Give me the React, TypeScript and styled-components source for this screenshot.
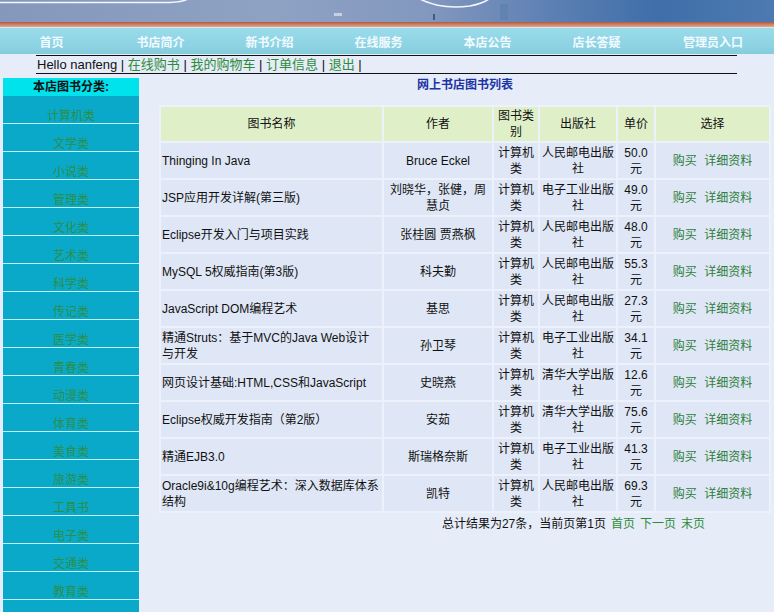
import styled, { createGlobalStyle } from 'styled-components';

const GlobalStyle = createGlobalStyle`
  html, body {
    margin: 0;
    padding: 0;
    background: #e6ecf8;
    font-family: "Liberation Sans", "Noto Sans CJK SC", sans-serif;
    font-size: 12px;
    color: #111;
  }
`;

const Page = styled.div`
  width: 774px;
  overflow: hidden;
`;

const Banner = styled.div`
  height: 22px;
  background: linear-gradient(90deg, #8598bb 0%, #8ea2c4 35%, #8398be 55%, #5b7fb3 72%, #3f6ea9 85%, #4d7ab0 100%);
  svg {
    display: block;
  }
`;

const Stripe = styled.div`
  height: 5px;
  background: linear-gradient(180deg, #a85c46 0%, #d8876a 60%, #e9a48a 100%);
  border-bottom: 1px solid #c8eef5;
`;

const Nav = styled.div`
  display: flex;
  height: 26px;
  align-items: center;
  background: linear-gradient(180deg, #9adbea 0%, #8dd3e3 70%, #84cbdc 100%);
`;

const NavItem = styled.span<{ $wide?: boolean }>`
  width: ${(p) => (p.$wide ? '124px' : '109px')};
  flex: none;
  text-align: center;
  color: #f2fbff;
  font-weight: bold;
  font-size: 12px;
  &:first-child {
    margin-left: -3px;
  }
`;

const UserBar = styled.div`
  margin: 1px 37px 0 36px;
  border-top: 1px solid #111;
  border-bottom: 1px solid #111;
  height: 17px;
  line-height: 17px;
  font-size: 13px;
  padding-left: 1px;
`;

const GreenLink = styled.span`
  color: #2e8b3a;
`;

const FooterLink = styled.span`
  color: #2e8b3a;
  margin-left: 5px;
`;

const Body = styled.div`
  display: flex;
  align-items: flex-start;
  margin-top: 4px;
  padding-left: 3px;
`;

const Sidebar = styled.div`
  width: 136px;
  flex: none;
  display: flex;
  flex-direction: column;
`;

const SideHead = styled.div`
  height: 18px;
  line-height: 18px;
  background: #00e3ec;
  text-align: center;
  font-weight: bold;
  color: #111;
`;

const SideItem = styled.div`
  height: 27px;
  border-bottom: 1px solid #bdf2f8;
  background: #0aa9ca;
  color: #2a8f48;
  display: flex;
  align-items: flex-end;
  justify-content: center;
  line-height: 14px;
`;

const Main = styled.div`
  margin-left: 20px;
  width: 612px;
  display: flex;
  flex-direction: column;
`;

const Title = styled.div`
  text-align: center;
  color: #1b35a6;
  font-weight: bold;
  font-size: 12px;
  line-height: 16px;
  margin-top: -1px;
  margin-bottom: 12px;
`;

const BookTable = styled.table`
  width: 612px;
  table-layout: fixed;
  border-spacing: 2px;
  background: #edf1fb;
`;

const HeadCell = styled.th`
  background: #dff0c9;
  font-weight: normal;
  height: 32px;
  padding: 1px 2px;
  line-height: 16px;
  text-align: center;
`;

const Cell = styled.td<{ $left?: boolean }>`
  background: #dfe7f6;
  height: 33px;
  padding: ${(p) => (p.$left ? '1px 1px' : '1px 2px')};
  line-height: 16px;
  text-align: ${(p) => (p.$left ? 'left' : 'center')};
`;

const Actions = styled.span`
  color: #2e7d3a;
  word-spacing: 4px;
`;

const Footer = styled.div`
  text-align: right;
  padding-right: 66px;
  line-height: 16px;
  margin-top: 3px;
`;

const navItems = ['首页', '书店简介', '新书介绍', '在线服务', '本店公告', '店长答疑', '管理员入口'];

const categories = [
  '计算机类', '文学类', '小说类', '管理类', '文化类', '艺术类', '科学类', '传记类', '医学类',
  '青春类', '动漫类', '体育类', '美食类', '旅游类', '工具书', '电子类', '交通类', '教育类', '',
];

const books = [
  ['Thinging In Java', 'Bruce Eckel', '人民邮电出版社', '50.0'],
  ['JSP应用开发详解(第三版)', '刘晓华，张健，周慧贞', '电子工业出版社', '49.0'],
  ['Eclipse开发入门与项目实践', '张桂圆 贾燕枫', '人民邮电出版社', '48.0'],
  ['MySQL 5权威指南(第3版)', '科夫勤', '人民邮电出版社', '55.3'],
  ['JavaScript DOM编程艺术', '基思', '人民邮电出版社', '27.3'],
  ['精通Struts：基于MVC的Java Web设计与开发', '孙卫琴', '电子工业出版社', '34.1'],
  ['网页设计基础:HTML,CSS和JavaScript', '史晓燕', '清华大学出版社', '12.6'],
  ['Eclipse权威开发指南（第2版）', '安茹', '清华大学出版社', '75.6'],
  ['精通EJB3.0', '斯瑞格奈斯', '电子工业出版社', '41.3'],
  ['Oracle9i&10g编程艺术：深入数据库体系结构', '凯特', '人民邮电出版社', '69.3'],
];

const BannerArt = () => (
  <svg width="774" height="22" viewBox="0 0 774 22">
    <path d="M0 2.5 L170 2.5 Q182 2 188 -1" stroke="#f4f7ff" strokeWidth="1.5" fill="none" />
    <path d="M418 -2 Q440 10 470 6 Q485 3 490 -2" stroke="#f2f6ff" strokeWidth="1.6" fill="none" />
    <rect x="334" y="13" width="8" height="3" fill="#dfe6f2" opacity="0.7" />
    <rect x="433" y="14" width="2" height="6" fill="#1d3550" opacity="0.6" />
    <rect x="500" y="4" width="8" height="16" fill="#5a80a8" opacity="0.6" />
  </svg>
);

const App = () => {
  return (
    <Page>
      <GlobalStyle />
      <Banner>
        <BannerArt />
      </Banner>
      <Stripe />
      <Nav>
        {navItems.map((n, i) => (
          <NavItem key={n} $wide={i === navItems.length - 1}>
            {n}
          </NavItem>
        ))}
      </Nav>
      <UserBar>
        Hello nanfeng | <GreenLink>在线购书</GreenLink> | <GreenLink>我的购物车</GreenLink> |{' '}
        <GreenLink>订单信息</GreenLink> | <GreenLink>退出</GreenLink> |
      </UserBar>
      <Body>
        <Sidebar>
          <SideHead>本店图书分类:</SideHead>
          {categories.map((c, i) => (
            <SideItem key={i}>{c}</SideItem>
          ))}
        </Sidebar>
        <Main>
          <Title>网上书店图书列表</Title>
          <BookTable>
            <colgroup>
              <col style={{ width: 221 }} />
              <col style={{ width: 108 }} />
              <col style={{ width: 44 }} />
              <col style={{ width: 76 }} />
              <col style={{ width: 36 }} />
              <col style={{ width: 113 }} />
            </colgroup>
            <thead>
              <tr>
                <HeadCell>图书名称</HeadCell>
                <HeadCell>作者</HeadCell>
                <HeadCell>图书类别</HeadCell>
                <HeadCell>出版社</HeadCell>
                <HeadCell>单价</HeadCell>
                <HeadCell>选择</HeadCell>
              </tr>
            </thead>
            <tbody>
              {books.map(([name, author, press, price]) => (
                <tr key={name}>
                  <Cell $left>{name}</Cell>
                  <Cell>{author}</Cell>
                  <Cell>计算机类</Cell>
                  <Cell>{press}</Cell>
                  <Cell>{price}元</Cell>
                  <Cell>
                    <Actions>购买 详细资料</Actions>
                  </Cell>
                </tr>
              ))}
            </tbody>
          </BookTable>
          <Footer>
            总计结果为27条，当前页第1页
            <FooterLink>首页</FooterLink>
            <FooterLink>下一页</FooterLink>
            <FooterLink>末页</FooterLink>
          </Footer>
        </Main>
      </Body>
    </Page>
  );
};

export default App;
